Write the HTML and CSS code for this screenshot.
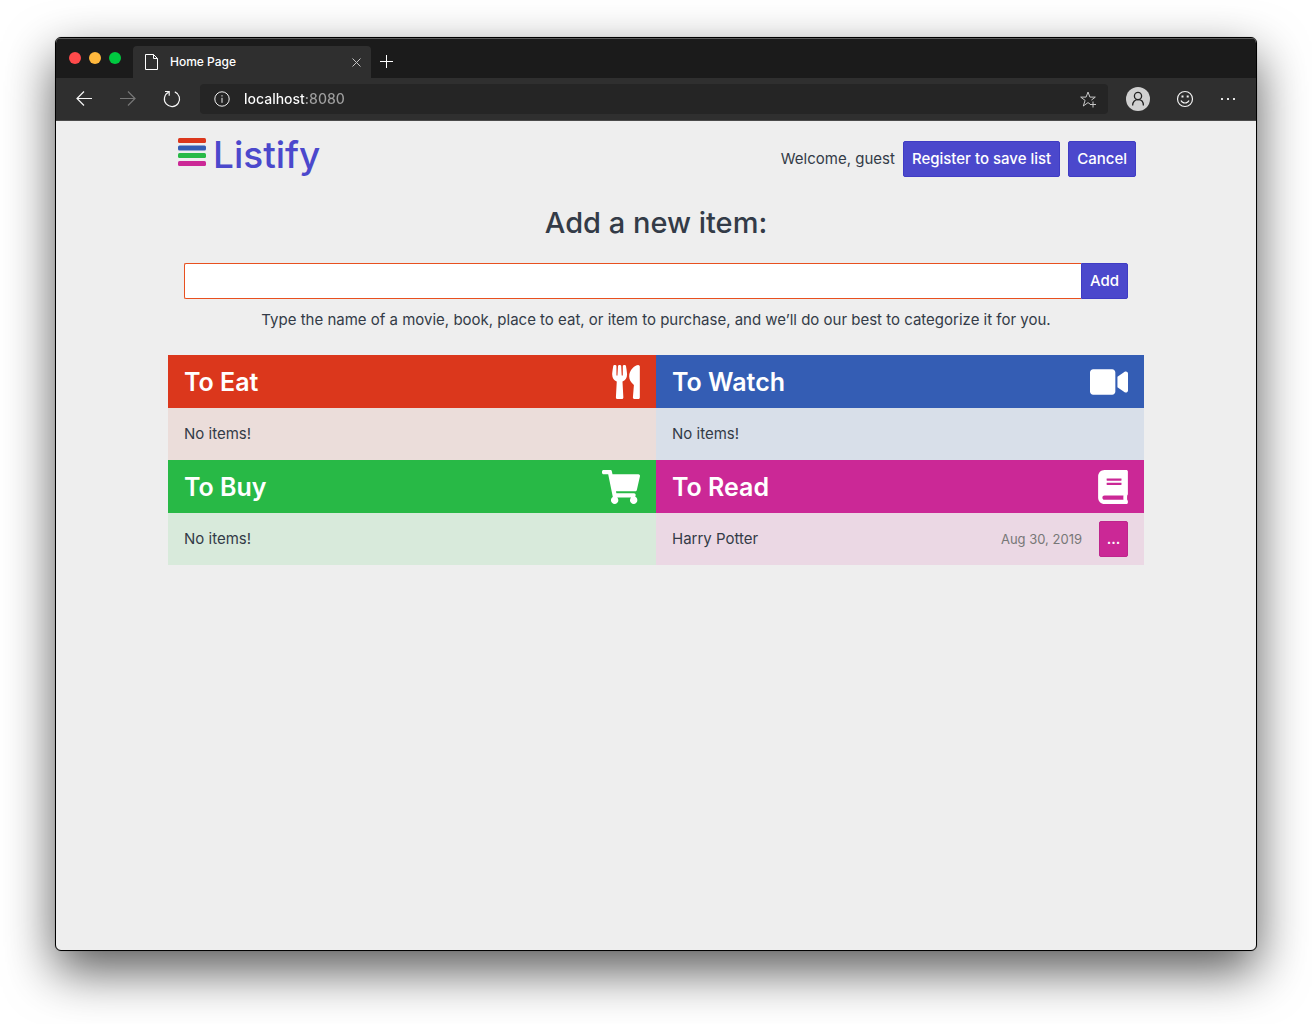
FILE: index.html
```html
<!DOCTYPE html>
<html lang="en">
<head>
<meta charset="utf-8">
<meta name="viewport" content="width=device-width, initial-scale=1">
<title>Home Page</title>
<link rel="stylesheet" href="styles.css">
</head>
<body>
<div class="window">
  <div class="titlebar">
    <div class="lights">
      <button class="light red" aria-label="Close window"></button>
      <button class="light amber" aria-label="Minimize window"></button>
      <button class="light green" aria-label="Zoom window"></button>
    </div>
    <div class="tab">
      <svg width="13" height="16" viewBox="0 0 13 16" fill="none" stroke="#fff"><path d="M.5.5h8l4 4v11H.5zM8.500.5v4h4"/></svg>
      <span class="tab-title">Home Page</span>
      <button class="icon-btn" aria-label="Close tab"><svg width="9" height="9" viewBox="0 0 9 9" fill="none" stroke="#c4c4c4"><path d="M.5.5l8 8M8.500.5l-8 8"/></svg></button>
    </div>
    <button class="icon-btn new-tab" aria-label="New tab"><svg width="13" height="13" viewBox="0 0 13 13" fill="none" stroke="#fff"><path d="M6.500 0v13M0 6.500h13"/></svg></button>
  </div>
  <div class="toolbar">
    <div class="nav">
      <button class="icon-btn" aria-label="Back"><svg width="18" height="18" viewBox="-1 -1 18 18" fill="none" stroke="#f5f5f5" stroke-width="1.200"><path d="M16 7.500H1M8 .5L1 7.500l7 7"/></svg></button>
      <button class="icon-btn" aria-label="Forward" disabled><svg width="18" height="18" viewBox="-1 -1 18 18" fill="none" stroke="#777" stroke-width="1.200"><path d="M0 7.500h15M8 .5l7 7-7 7"/></svg></button>
      <button class="icon-btn" aria-label="Reload"><svg width="18" height="18" viewBox="0 0 18 18" fill="none" stroke="#f5f5f5" stroke-width="1.200"><path d="M11.800 1.900A7.600 7.600 0 1 1 5.500 2.200M2 1.500h4.200v4.200"/></svg></button>
    </div>
    <div class="address">
      <svg width="16" height="16" viewBox="0 0 16 16" fill="none" stroke="#f0f0f0"><circle cx="8" cy="8" r="7.200"/><path d="M8 6.800v5M8 4.200v1.300"/></svg>
      <input class="url" type="text" value="localhost:8080" aria-label="Address">
      <button class="icon-btn" aria-label="Add to favorites"><svg width="17" height="17" viewBox="0 0 17 17" fill="none" stroke="#c8c8c8"><path d="M10 13L8 11.600 3.300 15l1.800-5.600L.7 6.100h5.400L8 1l1.900 5.100h5.400l-3.900 3M13 10.500v6M10 13.500h6"/></svg></button>
    </div>
    <div class="tools">
      <button class="avatar" aria-label="Profile"><svg width="14" height="16" viewBox="0 0 14 16" fill="none" stroke="#222" stroke-width="1.300"><circle cx="7" cy="5" r="3.600"/><path d="M1.600 14.500c0-3.800 2.200-5.800 5.400-5.800s5.400 2 5.400 5.800"/></svg></button>
      <button class="icon-btn" aria-label="Send feedback"><svg width="18" height="18" viewBox="0 0 18 18" fill="none" stroke="#f0f0f0" stroke-width="1.200"><circle cx="9" cy="9" r="7.500"/><path d="M5 10.500c1.500 3.300 6.500 3.300 8 0"/><path d="M5.500 6.500h2M10.700 6.500h2" stroke-width="2"/></svg></button>
      <button class="icon-btn" aria-label="Settings and more"><svg width="16" height="4" viewBox="0 0 16 4" fill="#e4e4e4"><path d="M1 1h2v2H1zM7 1h2v2H7zM13 1h2v2h-2z"/></svg></button>
    </div>
  </div>
  <main class="page">
    <header class="site-header">
      <a class="logo" href="#">
        <svg width="28" height="28" viewBox="0 0 28 28"><rect width="28" height="5" rx="1.500" fill="#db371c"/><rect y="7.500" width="28" height="5" rx="1.500" fill="#345db4"/><rect y="15" width="28" height="5" rx="1.500" fill="#28b946"/><rect y="23" width="28" height="5" rx="1.500" fill="#cb2896"/></svg>
        <span>Listify</span>
      </a>
      <div class="account">
        <span>Welcome, guest</span>
        <button class="btn">Register to save list</button>
        <button class="btn">Cancel</button>
      </div>
    </header>
    <form class="add-form">
      <label class="form-title" for="item">Add a new item:</label>
      <div class="input-group">
        <input class="item-input" id="item" type="text" aria-describedby="hint">
        <button class="btn btn-add" type="button">Add</button>
      </div>
      <p class="hint" id="hint">Type the name of a movie, book, place to eat, or item to purchase, and we’ll do our best to categorize it for you.</p>
    </form>
    <div class="lists">
      <section class="list eat">
        <h2 class="list-head">To Eat
          <svg width="28" height="34" viewBox="0 0 416 512" fill="#fff"><path d="M207.900 15.200c.8 4.700 16.100 94.500 16.100 128.800 0 52.300-27.800 89.600-68.900 104.600L168 486.700c.7 13.700-10.200 25.300-24 25.300H80c-13.700 0-24.700-11.500-24-25.300l12.900-238.100C27.700 233.600 0 196.200 0 144 0 109.600 15.300 19.900 16.100 15.200 19.300-5.100 61.400-5.400 64 16.300v141.200c1.300 3.400 15.100 3.200 16 0 1.400-25.300 7.900-139.200 8-141.800 3.300-20.800 44.700-20.800 47.900 0 .2 2.700 6.600 116.500 8 141.800.9 3.200 14.800 3.400 16 0V16.300c2.600-21.600 44.800-21.400 47.900-1.100zm119.200 285.700l-15 185.100c-1.200 14 9.900 26 23.900 26h56c13.300 0 24-10.700 24-24V24c0-13.200-10.700-24-24-24-82.500 0-221.400 178.500-64.900 300.900z"/></svg>
        </h2>
        <p class="row">No items!</p>
      </section>
      <section class="list watch">
        <h2 class="list-head">To Watch
          <svg width="38" height="34" viewBox="0 0 576 512" fill="#fff"><path d="M336.200 64H47.800C21.400 64 0 85.400 0 111.800v288.400C0 426.600 21.400 448 47.800 448h288.400c26.400 0 47.800-21.400 47.800-47.800V111.800c0-26.400-21.400-47.800-47.800-47.800zm189.400 37.700L416 177.300v157.400l109.600 75.500c21.200 14.600 50.400-.3 50.400-25.800V127.500c0-25.400-29.100-40.400-50.400-25.800z"/></svg>
        </h2>
        <p class="row">No items!</p>
      </section>
      <section class="list buy">
        <h2 class="list-head">To Buy
          <svg width="38" height="34" viewBox="0 0 576 512" fill="#fff"><path d="M528.120 301.319l47.273-208C578.806 78.301 567.391 64 551.990 64H159.208l-9.166-44.810C147.758 8.021 137.930 0 126.529 0H24C10.745 0 0 10.745 0 24v16c0 13.255 10.745 24 24 24h69.883l70.248 343.435C147.325 417.100 136 435.222 136 456c0 30.928 25.072 56 56 56s56-25.072 56-56c0-15.674-6.447-29.835-16.824-40h209.647C430.447 426.165 424 440.326 424 456c0 30.928 25.072 56 56 56s56-25.072 56-56c0-22.172-12.888-41.332-31.579-50.405l5.517-24.276c3.413-15.018-8.002-29.319-23.403-29.319H218.117l-6.545-32h293.145c11.206 0 20.920-7.754 23.403-18.681z"/></svg>
        </h2>
        <p class="row">No items!</p>
      </section>
      <section class="list read">
        <h2 class="list-head">To Read
          <svg width="30" height="34" viewBox="0 0 448 512" fill="#fff"><path d="M448 360V24c0-13.300-10.700-24-24-24H96C43 0 0 43 0 96v320c0 53 43 96 96 96h328c13.300 0 24-10.700 24-24v-16c0-7.500-3.500-14.300-8.900-18.700-4.200-15.400-4.200-59.300 0-74.700 5.400-4.300 8.900-11.100 8.900-18.600zM128 134c0-3.300 2.700-6 6-6h212c3.300 0 6 2.700 6 6v20c0 3.300-2.700 6-6 6H134c-3.300 0-6-2.700-6-6v-20zm0 64c0-3.300 2.700-6 6-6h212c3.300 0 6 2.700 6 6v20c0 3.300-2.700 6-6 6H134c-3.300 0-6-2.700-6-6v-20zm253.400 250H96c-17.700 0-32-14.300-32-32 0-17.600 14.400-32 32-32h285.400c-1.900 17.100-1.900 46.900 0 64z"/></svg>
        </h2>
        <div class="row">
          <span class="item-name">Harry Potter</span>
          <time class="date" datetime="2019-08-30">Aug 30, 2019</time>
          <button class="btn btn-more" aria-label="More options">...</button>
        </div>
      </section>
    </div>
  </main>
</div>
</body>
</html>
```
FILE: styles.css
```css
* { box-sizing: border-box; }

body {
  margin: 0;
  min-height: 100vh;
  padding: 37px 55px 73px;
  display: flex;
  background: #fff;
  color: #333b47;
  font: 15px/20px Inter, "Liberation Sans", sans-serif;
}

button, input { font: inherit; }
button { cursor: pointer; }
svg { display: block; flex: none; }
h2, p { margin: 0; }

/* Browser window */
.window {
  flex: 1;
  min-width: 0;
  display: flex;
  flex-direction: column;
  border: 1px solid #000;
  border-radius: 6px;
  overflow: hidden;
  background: #eee;
  box-shadow: 0 0 1px rgba(0, 0, 0, .4), 0 20px 50px rgba(0, 0, 0, .65);
}

.titlebar {
  height: 40px;
  display: flex;
  align-items: flex-end;
  background: #1b1b1b;
  border-top: 1px solid #5c5c5c;
}

.lights {
  display: flex;
  gap: 8px;
  padding: 0 12px 14px 13px;
}

.light {
  width: 12px;
  height: 12px;
  padding: 0;
  border: 0;
  border-radius: 50%;
}

.red { background: #ff4a4b; }
.amber { background: #ffb83d; }
.green { background: #00c940; }

.tab {
  width: 238px;
  height: 32px;
  display: flex;
  align-items: center;
  gap: 12px;
  padding: 0 10px 0 12px;
  border-radius: 4px 4px 0 0;
  background: #2f2f2f;
}

.tab-title {
  flex: 1;
  color: #fff;
  font-size: 12px;
  font-weight: 500;
}

.icon-btn {
  display: flex;
  padding: 0;
  border: 0;
  background: none;
}

.new-tab { padding: 10px 9px; }

.toolbar {
  height: 43px;
  display: flex;
  align-items: center;
  background: #2f2f2f;
  border-bottom: 1px solid #4a4a4a;
}

.nav {
  display: flex;
  align-items: center;
  gap: 26px;
  padding: 0 19px;
}

.address {
  flex: 1;
  height: 30px;
  display: flex;
  align-items: center;
  gap: 14px;
  padding: 0 11px 0 14px;
  border-radius: 4px;
  background: #252525;
}

/* The host name is white, the port is dimmed */
.url {
  flex: 1;
  min-width: 0;
  padding: 0;
  border: 0;
  outline: 0;
  font-size: 14px;
  font-weight: 500;
  color: #fff;
  background: linear-gradient(90deg, #fff 62px, #a0a0a0 62px);
  background-clip: text;
  -webkit-background-clip: text;
  -webkit-text-fill-color: transparent;
}

.tools {
  display: flex;
  align-items: center;
  gap: 26px;
  padding: 0 20px 0 18px;
}

.avatar {
  width: 24px;
  height: 24px;
  display: flex;
  align-items: center;
  justify-content: center;
  padding: 0;
  border: 0;
  border-radius: 50%;
  background: #d0d0d0;
}

/* Page */
.page {
  flex: 1;
  padding: 12px 112px 40px;
}

.site-header {
  display: flex;
  justify-content: space-between;
  padding: 0 8px 0 10px;
}

.logo {
  display: flex;
  align-items: center;
  gap: 7px;
  height: 44px;
  color: #4b48cc;
  font-size: 37px;
  line-height: 44px;
  font-weight: 500;
  text-decoration: none;
}

.logo svg { margin-bottom: 6px; }

.account {
  display: flex;
  align-items: center;
  gap: 8px;
  padding-top: 8px;
}

.btn {
  height: 36px;
  padding: 0 8px;
  border: 1px solid #3f3cc4;
  border-radius: 2px;
  background: #4b48cc;
  color: #fff;
  font-weight: 500;
}

.add-form {
  padding: 26px 16px 0;
  text-align: center;
}

.form-title {
  display: block;
  font-size: 29px;
  line-height: 40px;
  font-weight: 500;
}

.input-group {
  display: flex;
  margin-top: 20px;
}

.item-input {
  flex: 1;
  min-width: 0;
  height: 36px;
  padding: 0 8px;
  border: 1px solid #e8501f;
  border-right: 0;
  border-radius: 2px 0 0 2px;
  outline: 0;
  background: #fff;
}

.btn-add { border-radius: 0 2px 2px 0; }

.hint { margin: 11px 0 25px; }

.lists {
  display: grid;
  grid-template-columns: 1fr 1fr;
}

.list-head {
  height: 53px;
  display: flex;
  align-items: center;
  justify-content: space-between;
  padding: 0 16px;
  color: #fff;
  font-size: 25px;
  line-height: 32px;
  font-weight: 600;
}

.row {
  height: 52px;
  display: flex;
  align-items: center;
  padding: 0 16px;
}

.item-name { flex: 1; }

.date {
  margin-right: 17px;
  color: #777;
  font-size: 13px;
}

.eat .list-head { background: #db371c; }
.eat .row { background: #ebddda; }
.watch .list-head { background: #345db4; }
.watch .row { background: #d8dfe9; }
.buy .list-head { background: #28b946; }
.buy .row { background: #d8eadb; }
.read .list-head { background: #cb2896; }
.read .row { background: #ebd8e4; }

.btn-more {
  width: 29px;
  padding: 0;
  border-color: #be258c;
  background: #cb2896;
}
```
